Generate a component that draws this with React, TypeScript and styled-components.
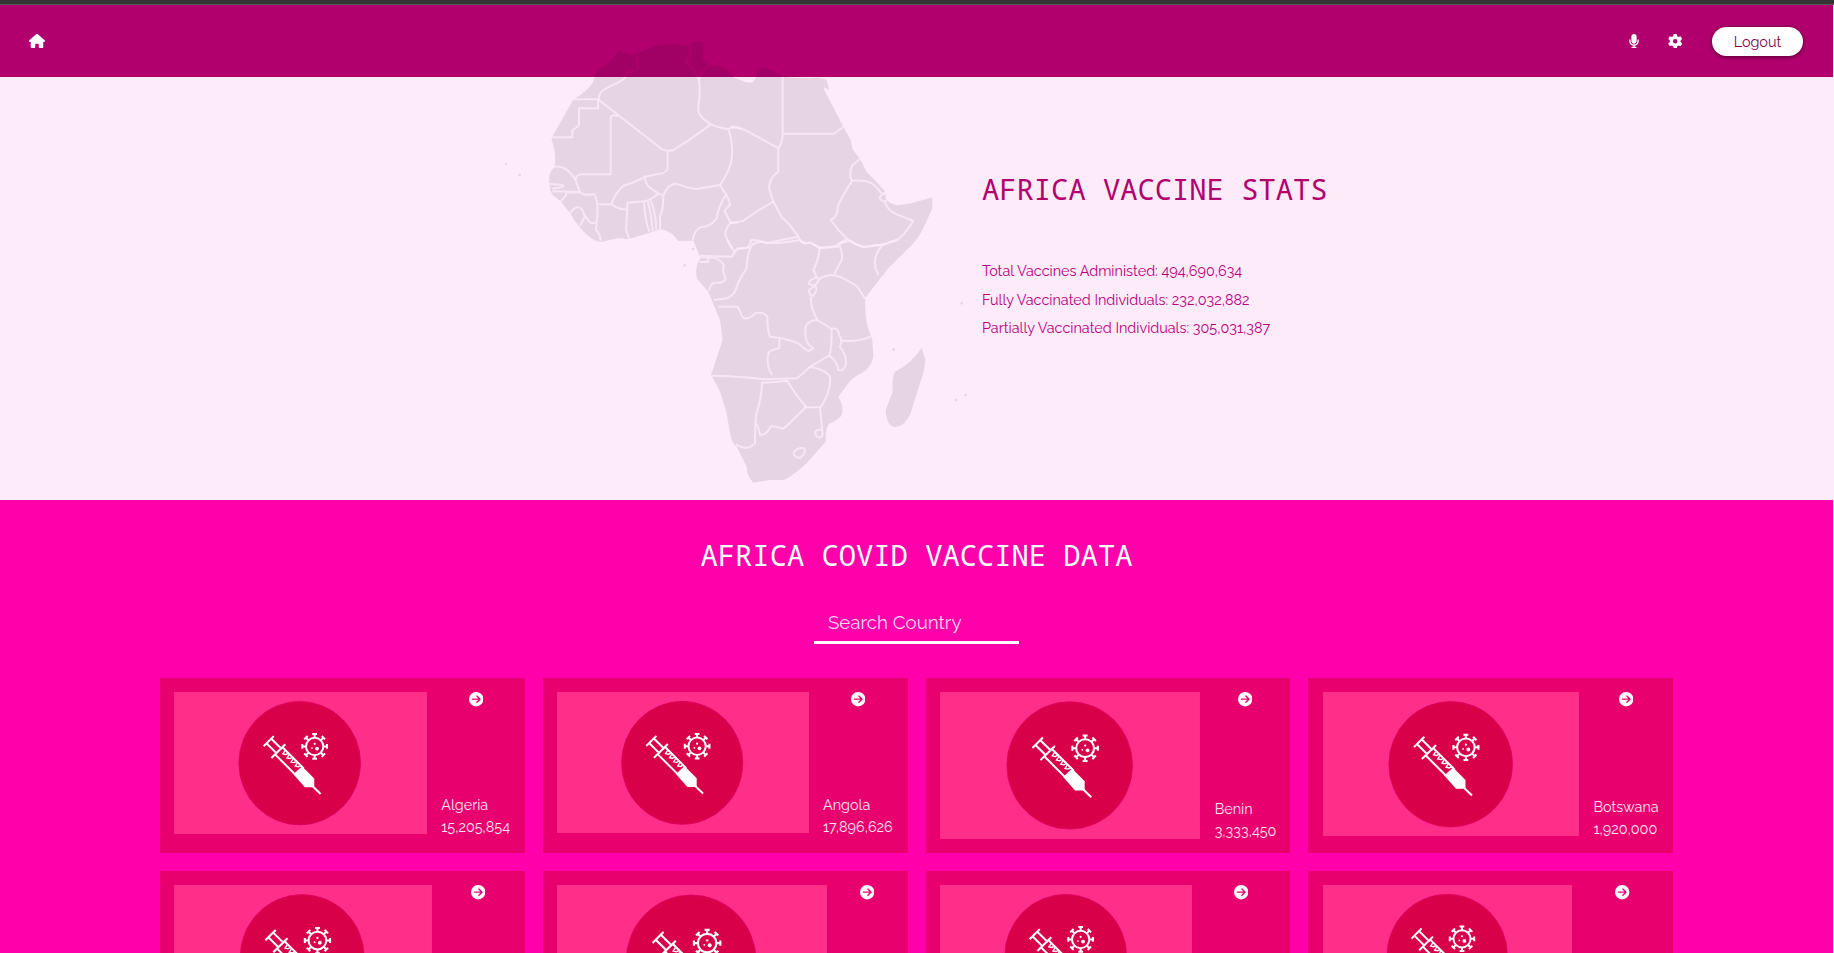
import React from "react";
import styled, { createGlobalStyle } from "styled-components";
import { FaHouse, FaMicrophone, FaGear, FaCircleArrowRight } from "react-icons/fa6";

const sans = `Raleway, Lato, "Open Sans", sans-serif`;
const mono = `"Noto Sans Mono", "DejaVu Sans Mono", monospace`;

const GlobalStyle = createGlobalStyle`
  * { box-sizing: border-box; }
  body { margin: 0; background: #fdebfa; font-family: ${sans}; font-size: 14.4px; overflow: hidden; }
  h1, h2, p { margin: 0; font-weight: 400; }
`;

const Page = styled.div`
  height: 953px;
  padding-right: 1px;
  display: flex;
  flex-direction: column;
  overflow: hidden;
`;

const TopEdge = styled.div`
  flex: none;
  height: 5px;
  margin-right: -1px;
  background: #353535;
  border-bottom: 1px solid #5c5c5c;
`;

const Header = styled.header`
  flex: none;
  height: 72px;
  padding: 0 30px 0 29px;
  display: flex;
  align-items: center;
  justify-content: space-between;
  background: #b1006e;
  color: #fff;
`;

const Actions = styled.div`
  display: flex;
  align-items: center;
`;

const ActionIcon = styled.span<{ $after: number }>`
  display: flex;
  margin-right: ${(p) => p.$after}px;
`;

const LogoutButton = styled.button`
  width: 91px;
  height: 29px;
  padding: 0;
  border: 0;
  border-radius: 15px;
  background: #fff;
  color: #80004f;
  font: 400 14.4px ${sans};
  box-shadow: 0 1px 4px rgba(0, 0, 0, 0.55);
`;

const Hero = styled.section`
  flex: none;
  height: 423px;
  padding-left: 490px;
  display: flex;
  background: #fdebfa;
`;

const Map = styled.svg`
  flex: none;
  width: 492px;
  height: 470px;
  margin-top: -47px;
  position: relative;
  overflow: visible;
`;

const Stats = styled.div`
  padding-top: 94px;
  color: #b8007c;
`;

const Title = styled.h1`
  font: 400 28.8px/36px ${mono};
  white-space: nowrap;
  color: #b1006e;
`;

const StatList = styled.div`
  margin-top: 50px;
`;

const Stat = styled.p`
  line-height: 28.6px;
  white-space: nowrap;
`;

const Data = styled.section`
  flex: 1;
  min-height: 0;
  overflow: hidden;
  padding: 37px 160px 0;
  display: flex;
  flex-direction: column;
  align-items: center;
  background: #ff00aa;
  color: #fff;
`;

const DataTitle = styled(Title).attrs({ as: "h2" })`
  color: #fff;
`;

const Search = styled.input`
  flex: none;
  width: 205px;
  height: 38px;
  margin-top: 33px;
  padding: 0 14px 3px;
  border: 0;
  border-bottom: 3px solid #fff;
  background: transparent;
  color: #fff;
  font: 400 18.72px ${sans};
  &::placeholder { color: #ffd9f2; opacity: 1; }
`;

const Grid = styled.div`
  align-self: stretch;
  margin-top: 34px;
  display: grid;
  grid-template-columns: repeat(4, 1fr);
  gap: 18px;
`;

const Card = styled.article`
  height: 175px;
  padding: 14.4px;
  display: flex;
  align-items: flex-start;
  gap: 14.4px;
  background: #e8006f;
`;

const Picture = styled.svg`
  flex: 1;
  min-width: 0;
  aspect-ratio: 253 / 142;
  background: #ff2e88;
`;

const Info = styled.div<{ $width: number }>`
  flex: none;
  align-self: stretch;
  width: ${(p) => p.$width}px;
  display: flex;
  flex-direction: column;
  align-items: center;
  justify-content: space-between;
`;

const Label = styled.div<{ $bottom: number }>`
  align-self: stretch;
  line-height: 22px;
  white-space: nowrap;
  color: #ffe6f2;
  margin-bottom: ${(p) => p.$bottom}px;
`;

const spikes = [0, 45, 90, 135, 180, 225, 270, 315];

const VaccinePicture = () => (
  <Picture viewBox="0 0 253 142" preserveAspectRatio="none">
    <ellipse cx="126" cy="71.3" rx="61" ry="61.9" fill="#d9004a" stroke="#e00062" strokeWidth="0.8" />
    <g fill="none" stroke="#fff" strokeWidth="2">
      <circle cx="141" cy="54.6" r="8.7" />
      {spikes.map((a) => (
        <path key={a} d="M141 46V42M138.6 42.2H143.4" transform={`rotate(${a} 141 54.6)`} />
      ))}
      <path d="M89.8 54.4L100 44.2M92.7 51.4L103.4 62M97.5 46.8L108.2 57.4M97.6 66.2L111.6 52.4" />
      <path d="M101.3 62.5L122 83.2M108.8 55.4L130 76.6" />
      <path d="M111.5 58.5L109.2 62L112.2 62.6L114.7 61.4M115.6 62.6L113.3 66.1L116.3 66.7L118.8 65.5M119.7 66.7L117.4 70.2L120.4 70.8L122.9 69.6M123.8 70.8L121.5 74.3L124.5 74.9L127 73.7" strokeWidth="1.4" />
      <path d="M139 94.5L147 102.2" />
    </g>
    <g fill="#fff">
      <path d="M119.7 82.5L128.3 74.4L140.6 86.8V95.6H131.2Z" />
      <circle cx="141" cy="52" r="1.1" />
      <circle cx="138.3" cy="56.2" r="0.9" />
      <circle cx="143.4" cy="56.7" r="1.9" />
    </g>
  </Picture>
);

const AfricaMap = () => (
  <Map viewBox="0 0 1476 1410">
    <mask id="borders" maskUnits="userSpaceOnUse" x="-200" y="0" width="1700" height="1410">
      <rect x="-200" width="1700" height="1410" fill="#fff" />
      <g fill="none" stroke="#000" strokeOpacity="0.78" strokeWidth="6" strokeLinejoin="round">
        <path d="M440 75L445 112Q440 124 415 126Q408 132 403 145C385 163 345 170 332 188Q325 198 327 212" />
        <path d="M250 208H324V235H267V285Q262 292 247 301V322H183" />
        <path d="M327 210L515 357Q530 366 550 360Q600 330 662 283L638 265Q622 250 625 230Q632 190 627 150Q618 125 588 97L603 66L600 45M655 106Q632 125 627 150" />
        <path d="M385 258L370 256Q362 258 362 265V433H272Q260 436 256 448" />
        <path d="M193 410C225 405 243 430 256 448L270 487M180 462L215 464Q225 468 215 472L187 476M187 484L270 486Q268 490 230 486L228 496L212 514" />
        <path d="M270 488Q290 498 312 492Q325 510 322 560Q320 575 318 600Q330 610 332 632M240 550Q260 520 277 540L285 558L270 588M285 558L303 580L322 577" />
        <path d="M324 523H365Q385 540 412 538L408 600L418 628M365 520Q375 490 400 467Q440 456 465 440Q465 460 480 474L505 490Q482 512 462 514L412 518V538" />
        <path d="M533 365V415Q530 430 500 433L465 440M462 516Q465 570 478 606M474 516Q486 560 488 604M482 512Q498 550 499 600M505 490L520 497Q520 540 510 560V600M520 497Q535 460 558 461Q595 475 620 477Q660 470 690 465Q722 420 726 380Q728 330 715 297Q690 295 662 283M715 297Q730 288 752 297" />
        <path d="M690 465L708 493Q685 530 680 565Q665 590 630 592Q610 605 608 632M708 493Q718 510 720 525L703 542L722 578H742M722 578Q700 605 708 620L725 655" />
        <g transform="translate(720 0)">
          <path d="M158 135V310Q158 340 145 353Q140 353 60 308Q20 285 0 292M158 311H312L340 291M145 353V425Q120 440 117 475L130 515Q145 540 155 562Q175 575 205 620Q215 645 240 637L270 655L325 650Q330 635 352 627L325 600L302 570Q325 560 323 530Q335 500 365 455Q355 425 368 405L390 387" />
          <path d="M365 452Q410 450 425 460Q445 475 457 492L465 487M470 491Q478 502 468 512Q455 518 449 503Q452 490 470 491M465 514Q470 540 500 553L550 573Q520 620 500 630Q450 650 400 650Q370 640 352 627M130 515Q60 555 40 573L0 580M205 620Q150 630 110 640Q85 628 63 630Q62 645 50 654L20 655" />
        </g>
        <g transform="translate(450 630)">
          <path d="M180 47L275 50L290 28L332 22Q340 5 370 6Q400 15 480 0M332 22Q320 50 320 85Q295 120 285 155Q270 178 245 177L222 180M262 0L285 38M180 52H205V66H178M205 52Q235 50 252 75Q245 95 257 115Q252 130 225 128Q210 130 207 152" />
          <path d="M235 200H293L308 232Q325 242 345 220Q370 213 382 230Q382 270 390 290Q430 292 475 310Q490 325 505 333L520 325Q490 310 497 260Q505 240 532 240L575 267Q575 330 568 345Q540 365 510 380Q485 405 470 415Q400 417 370 418Q330 410 215 407M418 293V325Q390 330 385 340Q378 380 397 405" />
          <path d="M480 0Q490 15 510 8L538 22Q540 50 520 90L530 112Q505 120 507 132L525 138L538 118Q570 95 605 113Q650 135 655 145L675 175M530 112L538 118M525 138Q535 145 520 168Q505 165 507 150L525 138M513 170Q510 200 532 240M538 22Q590 22 595 10Q610 40 605 60L583 102M595 10L632 2Q650 18 675 22Q710 10 725 18Q690 60 715 105M725 18Q745 5 775 0" />
          <path d="M575 267Q595 260 597 285Q610 300 600 320Q622 350 617 375Q610 395 595 390Q592 365 568 347M600 301Q650 308 692 290M510 380Q560 390 570 410Q575 450 542 502H500Q470 470 442 422L415 425L366 428Q365 470 350 520Q345 540 345 610Q320 635 288 614" />
          <path d="M349 550Q358 570 360 585Q380 585 393 558Q415 562 430 566Q450 550 500 498M540 502L547 575Q550 590 540 593Q523 590 526 575Q535 565 546 572M460 638Q475 620 493 625Q500 635 482 653Q465 655 460 638" />
        </g>
      </g>
    </mask>
    <g fill="#06000a" fillOpacity="0.095" mask="url(#borders)">
      <path d="M385 60Q410 75 435 75Q490 45 530 43L600 45L608 37Q625 30 640 38Q642 60 638 85L655 107Q700 100 732 142L765 156Q795 162 798 140Q800 115 820 113Q850 120 878 138Q920 148 980 143Q1005 145 1010 150L1017 179L1002 172L1003 180L1060 290L1082 330L1088 358L1110 387L1130 425Q1160 455 1185 484L1188 508Q1205 525 1225 526Q1265 522 1325 502Q1330 520 1325 540L1300 595Q1285 625 1268 642L1195 715L1125 805Q1125 860 1133 890L1147 930L1150 980Q1145 1010 1115 1030Q1090 1040 1075 1060L1045 1100Q1060 1125 1057 1148Q1055 1165 1020 1180Q1005 1190 1007 1235L950 1300Q900 1345 880 1350L840 1350L790 1358Q770 1338 770 1310L740 1250Q725 1240 720 1210L710 1150L690 1085Q675 1055 663 1035L698 930L690 870L655 785L622 748Q615 730 622 700L632 685L610 632L565 633L550 615Q530 600 510 598L480 608L415 628L385 625L335 635Q315 635 298 620Q270 600 240 550L212 514L188 495L180 480L177 445Q178 425 194 410Q200 370 184 326L188 317L250 209Q305 175 312 148Q315 125 340 108Q370 90 385 60Z" />
      <path d="M1295 953L1306 988Q1305 1020 1290 1060L1262 1150Q1245 1190 1215 1191Q1190 1190 1187 1140L1208 1085Q1205 1040 1215 1025Q1265 1000 1295 953Z" />
      <circle cx="48" cy="402" r="3" />
      <circle cx="89" cy="435" r="4" />
      <circle cx="609" cy="657" r="4" />
      <circle cx="584" cy="706" r="4" />
      <circle cx="1415" cy="820" r="4" />
      <circle cx="1211" cy="958" r="4" />
      <circle cx="1398" cy="1110" r="4" />
      <circle cx="1427" cy="1095" r="4" />
    </g>
  </Map>
);

interface Country {
  name?: string;
  total?: string;
  info: number;
  bottom: number;
}

const countries: Country[] = [
  { name: "Algeria", total: "15,205,854", info: 69.2, bottom: 0.6 },
  { name: "Angola", total: "17,896,626", info: 70.2, bottom: 0.6 },
  { name: "Benin", total: "3,333,450", info: 61.2, bottom: -3.4 },
  { name: "Botswana", total: "1,920,000", info: 65.2, bottom: -1.4 },
  { info: 64.2, bottom: 0 },
  { info: 52.2, bottom: 0 },
  { info: 69.2, bottom: 0 },
  { info: 72.2, bottom: 0 },
];

export default function App() {
  return (
    <Page>
      <GlobalStyle />
      <TopEdge />
      <Header>
        <FaHouse size={16} />
        <Actions>
          <ActionIcon $after={27}><FaMicrophone size={14} /></ActionIcon>
          <ActionIcon $after={30}><FaGear size={14.4} /></ActionIcon>
          <LogoutButton>Logout</LogoutButton>
        </Actions>
      </Header>
      <Hero>
        <AfricaMap />
        <Stats>
          <Title>AFRICA VACCINE STATS</Title>
          <StatList>
            <Stat>Total Vaccines Administed: 494,690,634</Stat>
            <Stat>Fully Vaccinated Individuals: 232,032,882</Stat>
            <Stat>Partially Vaccinated Individuals: 305,031,387</Stat>
          </StatList>
        </Stats>
      </Hero>
      <Data>
        <DataTitle>AFRICA COVID VACCINE DATA</DataTitle>
        <Search placeholder="Search Country" />
        <Grid>
          {countries.map((c, i) => (
            <Card key={i}>
              <VaccinePicture />
              <Info $width={c.info}>
                <FaCircleArrowRight size={14.4} />
                {c.name && (
                  <Label $bottom={c.bottom}>
                    <div>{c.name}</div>
                    <div>{c.total}</div>
                  </Label>
                )}
              </Info>
            </Card>
          ))}
        </Grid>
      </Data>
    </Page>
  );
}
